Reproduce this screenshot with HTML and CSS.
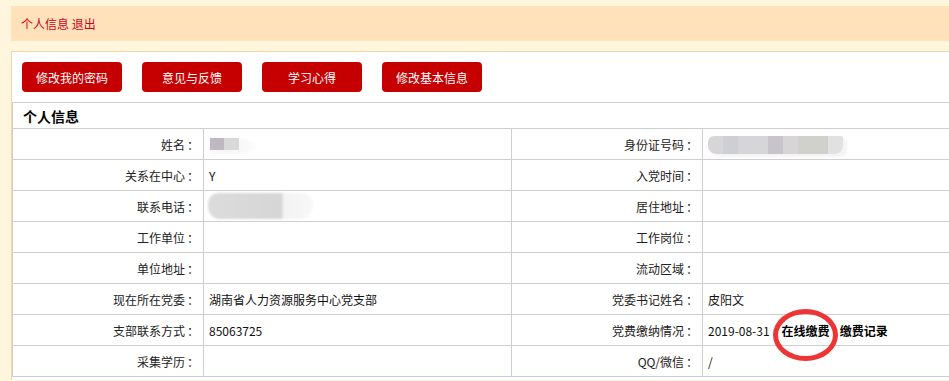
FILE: index.html
```html
<!DOCTYPE html>
<html lang="zh-CN">
<head>
<meta charset="utf-8">
<title>个人信息</title>
<link rel="stylesheet" href="styles.css">
</head>
<body>
<div class="topbar"><a class="toplink" href="#">个人信息</a> <a class="toplink" href="#">退出</a></div>
<div class="panel">
  <div class="actions">
    <a class="btn" href="#">修改我的密码</a>
    <a class="btn" href="#">意见与反馈</a>
    <a class="btn" href="#">学习心得</a>
    <a class="btn" href="#">修改基本信息</a>
  </div>
  <table class="info">
    <colgroup><col class="c-label"><col class="c-value"><col class="c-label"><col class="c-value"></colgroup>
    <tr class="head"><th colspan="4">个人信息</th></tr>
    <tr>
      <td class="lbl">姓名<span class="colon">：</span></td><td class="val"><span class="mask-name"><i class="m1"></i><i class="m2"></i></span></td>
      <td class="lbl">身份证号码<span class="colon">：</span></td><td class="val"><span class="mask-id"></span></td>
    </tr>
    <tr>
      <td class="lbl">关系在中心<span class="colon">：</span></td><td class="val">Y</td>
      <td class="lbl">入党时间<span class="colon">：</span></td><td class="val"></td>
    </tr>
    <tr>
      <td class="lbl">联系电话<span class="colon">：</span></td><td class="val"><span class="dot">.</span><span class="mask-phone"></span></td>
      <td class="lbl">居住地址<span class="colon">：</span></td><td class="val"></td>
    </tr>
    <tr>
      <td class="lbl">工作单位<span class="colon">：</span></td><td class="val"></td>
      <td class="lbl">工作岗位<span class="colon">：</span></td><td class="val"></td>
    </tr>
    <tr>
      <td class="lbl">单位地址<span class="colon">：</span></td><td class="val"></td>
      <td class="lbl">流动区域<span class="colon">：</span></td><td class="val"></td>
    </tr>
    <tr>
      <td class="lbl">现在所在党委<span class="colon">：</span></td><td class="val">湖南省人力资源服务中心党支部</td>
      <td class="lbl">党委书记姓名<span class="colon">：</span></td><td class="val">皮阳文</td>
    </tr>
    <tr>
      <td class="lbl">支部联系方式<span class="colon">：</span></td><td class="val">85063725</td>
      <td class="lbl">党费缴纳情况<span class="colon">：</span></td><td class="val">2019-08-31<span class="mark"><a class="plink" href="#">在线缴费</a><span class="ring"></span></span><a class="plink rec" href="#">缴费记录</a></td>
    </tr>
    <tr>
      <td class="lbl">采集学历<span class="colon">：</span></td><td class="val"></td>
      <td class="lbl">QQ/微信<span class="colon">：</span></td><td class="val">/</td>
    </tr>
  </table>
</div>
</body>
</html>
```
FILE: styles.css
```css
html, body {
  margin: 0;
  padding: 0;
  overflow: hidden;
}
body {
  background: #fff6dd;
  font-family: "Noto Sans CJK SC", "Liberation Sans", sans-serif;
  font-size: 12px;
  color: #333;
  padding-top: 6px;
  height: 375px;
}
.topbar {
  margin-left: 11px;
  height: 35px;
  line-height: 35px;
  padding-left: 10px;
  background: #ffe2b9;
}
.toplink {
  color: #d2001e;
  text-decoration: none;
}
.panel {
  margin-top: 10px;
  margin-left: 11px;
  border-top: 1px solid #efd9aa;
  border-left: 1px solid #efd9aa;
  background: #fff;
  height: 328px;
  overflow: hidden;
}
.actions {
  display: flex;
  gap: 20px;
  padding: 10px;
}
.btn {
  display: flex;
  align-items: center;
  justify-content: center;
  flex: none;
  width: 100px;
  height: 30px;
  border-radius: 4px;
  background: #c60000;
  color: #fff;
  text-decoration: none;
  font-size: 12px;
}
.info {
  border-collapse: collapse;
  table-layout: fixed;
  width: 999px;
}
.c-label { width: 191px; }
.c-value { width: 308px; }
.info th, .info td {
  border: 1px solid #cfcfcf;
  padding: 0;
}
.head th {
  height: 25px;
  text-align: left;
  padding-left: 10px;
  font-size: 14px;
  font-weight: bold;
  color: #000;
  line-height: 22px;
}
.info td {
  height: 30px;
  vertical-align: middle;
}
.lbl {
  text-align: right;
  padding-right: 4px !important;
  color: #222;
  white-space: nowrap;
}
.colon {
  font-family: "Noto Sans CJK TC", "Noto Sans CJK SC", sans-serif;
  margin-left: 2px;
}
.val {
  padding-left: 5px !important;
  color: #111;
  white-space: nowrap;
}
.mask-name {
  display: inline-flex;
  vertical-align: middle;
  padding: 2px 16px 4px 1px;
  background: radial-gradient(ellipse at 40% 60%, #f4f4f2 0%, #fafafa 60%, rgba(255,255,255,0) 75%);
}
.mask-name i {
  display: block;
  height: 12px;
}
.mask-name .m1 { width: 14px; background: #bfb7c1; }
.mask-name .m2 { width: 15px; background: #d9d9dc; }
.mask-id {
  display: inline-block;
  vertical-align: middle;
  width: 135px;
  height: 18px;
  border-radius: 6px 2px 8px 8px;
  background: linear-gradient(90deg, #d8d5d8 0, #d8d5d8 15px, #cdcfd2 15px, #cdcfd2 30px, #d6d6d8 30px, #d6d6d8 60px, #c7c5cb 60px, #c7c5cb 75px, #d7d5d6 75px, #d7d5d6 90px, #d0d0cc 90px, #d0d0cc 120px, #e1e1e3 120px, #e1e1e3 135px);
  box-shadow: 4px 3px 3px #f4f4f4;
}
.dot {
  color: #444;
}
.mask-phone {
  display: inline-block;
  vertical-align: middle;
  width: 105px;
  height: 26px;
  margin-left: -4px;
  border-radius: 12px 14px 16px 14px;
  background: linear-gradient(90deg, #dcdcdc 0, #d6d6d6 70%, #f3f3f3 72%, #f8f8f8 100%);
  filter: blur(1px);
}
.mark {
  position: relative;
  display: inline-block;
  margin-left: 12px;
}
.plink {
  color: #000;
  font-weight: bold;
  text-decoration: none;
}
.rec {
  margin-left: 10px;
}
.ring {
  position: absolute;
  left: -9px;
  top: -13px;
  width: 55px;
  height: 42px;
  border: 5px solid #ee3535;
  border-radius: 50%;
}
```
